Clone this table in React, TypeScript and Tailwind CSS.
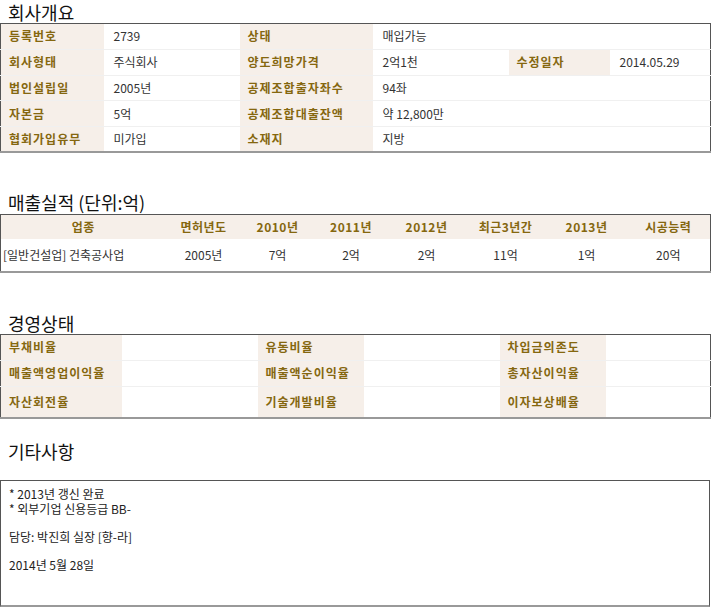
import React from "react";

const label = "bg-[#f6efe9] text-[#85670f] font-bold text-[12px] leading-[16px] pl-[8px] tracking-[1px]";
const value = "bg-white text-[#333] text-[12px] leading-[16px] pl-[10px]";

function Heading({ children, className }: { children: React.ReactNode; className?: string }) {
  return <h2 className={"text-[18px] leading-[22px] text-[#111] pl-[8px] " + (className ?? "")}>{children}</h2>;
}

export default function App() {
  // 회사개요
  const overview: [string, string, string, string, string?, string?][] = [
    ["등록번호", "2739", "상태", "매입가능"],
    ["회사형태", "주식회사", "양도희망가격", "2억1천", "수정일자", "2014.05.29"],
    ["법인설립일", "2005년", "공제조합출자좌수", "94좌"],
    ["자본금", "5억", "공제조합대출잔액", "약 12,800만"],
    ["협회가입유무", "미가입", "소재지", "지방"],
  ];

  const salesHead = ["업종", "면허년도", "2010년", "2011년", "2012년", "최근3년간", "2013년", "시공능력"];
  const salesRow = ["[일반건설업] 건축공사업", "2005년", "7억", "2억", "2억", "11억", "1억", "20억"];

  const status = [
    ["부채비율", "유동비율", "차입금의존도"],
    ["매출액영업이익율", "매출액순이익율", "총자산이익율"],
    ["자산회전율", "기술개발비율", "이자보상배율"],
  ];

  return (
    <div className="w-[720px] min-h-[613px] pt-[1px] bg-white font-['Noto_Sans_CJK_KR',sans-serif]">
      <Heading>회사개요</Heading>
      <table className="w-[710px] table-fixed border-collapse border border-[#555] border-b-2 border-b-[#999]">
        <colgroup>
          <col className="w-[103px]" />
          <col className="w-[136px]" />
          <col className="w-[133px]" />
          <col className="w-[136px]" />
          <col className="w-[101px]" />
          <col className="w-[101px]" />
        </colgroup>
        <tbody>
          {overview.map((r, i) => (
            <tr key={i} className="h-[25.8px] border-b border-[#f0f0f0] last:border-b-0">
              <td className={label}>{r[0]}</td>
              <td className={value}>{r[1]}</td>
              <td className={label}>{r[2]}</td>
              {r[4] ? (
                <>
                  <td className={value}>{r[3]}</td>
                  <td className={label}>{r[4]}</td>
                  <td className={value}>{r[5]}</td>
                </>
              ) : (
                <td className={value} colSpan={3}>{r[3]}</td>
              )}
            </tr>
          ))}
        </tbody>
      </table>

      <Heading className="mt-[38px]">매출실적 (단위:억)</Heading>
      <table className="w-[710px] table-fixed border-collapse mt-[1px] border border-[#555] border-b-2 border-b-[#999]">
        <colgroup>
          <col className="w-[165px]" />
          <col className="w-[76px]" />
          <col className="w-[72px]" />
          <col className="w-[75px]" />
          <col className="w-[76px]" />
          <col className="w-[82px]" />
          <col className="w-[80px]" />
          <col className="w-[84px]" />
        </colgroup>
        <thead>
          <tr className="h-[24px] bg-[#f6efe9]">
            {salesHead.map((h) => (
              <th key={h} className="text-[#85670f] font-bold text-[12px] leading-[16px] text-center tracking-[0.5px]">{h}</th>
            ))}
          </tr>
        </thead>
        <tbody>
          <tr className="h-[33px]">
            {salesRow.map((c, i) => (
              <td key={i} className={"text-[#333] text-[12px] leading-[16px] " + (i === 0 ? "text-left pl-[2px]" : "text-center")}>{c}</td>
            ))}
          </tr>
        </tbody>
      </table>

      <Heading className="mt-[39px]">경영상태</Heading>
      <table className="w-[710px] table-fixed border-collapse border border-[#555] border-b-2 border-b-[#999]">
        <colgroup>
          <col className="w-[121px]" />
          <col className="w-[136px]" />
          <col className="w-[106px]" />
          <col className="w-[136px]" />
          <col className="w-[106px]" />
          <col className="w-[105px]" />
        </colgroup>
        <tbody>
          {status.map((r, i) => (
            <tr key={i} className={(i === 2 ? "h-[32px]" : "h-[25.8px] border-b border-[#f0f0f0]")}>
              <td className={label}>{r[0]}</td>
              <td className={value}></td>
              <td className={label}>{r[1]}</td>
              <td className={value}></td>
              <td className={label}>{r[2]}</td>
              <td className={value}></td>
            </tr>
          ))}
        </tbody>
      </table>

      <Heading className="mt-[21px]">기타사항</Heading>
      <div className="w-[710px] h-[127px] mt-[18px] border border-[#555] border-b-2 border-b-[#999] pt-[5px] pl-[8px] text-[12px] leading-[15px] text-[#222]">
        <p>
          * 2013년 갱신 완료
          <br />
          * 외부기업 신용등급 BB-
        </p>
        <p className="mt-[13px]">담당: 박진희 실장 [향-라]</p>
        <p className="mt-[13px]">2014년 5월 28일</p>
      </div>
    </div>
  );
}
